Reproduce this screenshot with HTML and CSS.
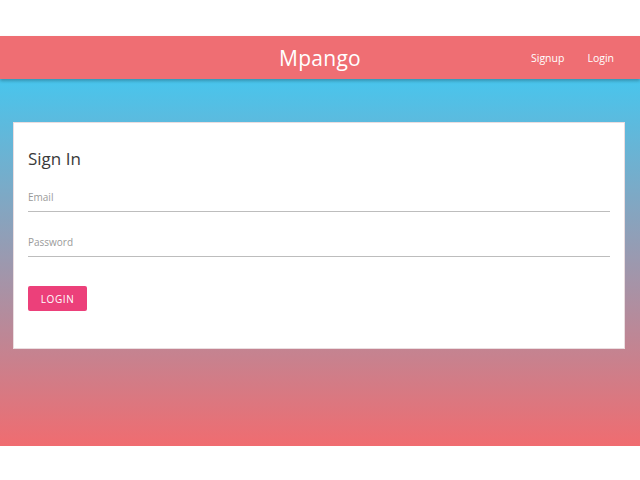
FILE: index.html
```html
<!DOCTYPE html>
<html>
<head>
<meta charset="utf-8">
<link rel="stylesheet" href="styles.css">
</head>
<body>
<div class="page">
  <header class="topbar">
    <div class="brand">Mpango</div>
    <nav class="nav">
      <a class="nav-link">Signup</a>
      <a class="nav-link">Login</a>
    </nav>
  </header>
  <main class="hero">
    <section class="card">
      <h1 class="card-title">Sign In</h1>
      <div class="field">
        <label class="field-label">Email</label>
      </div>
      <div class="field">
        <label class="field-label">Password</label>
      </div>
      <button class="btn">LOGIN</button>
    </section>
  </main>
</div>
</body>
</html>
```
FILE: styles.css
```css
* { box-sizing: border-box; }
html, body { margin: 0; padding: 0; background: #fff; }
body { font-family: "Open Sans", "Noto Sans", sans-serif; }
.page { padding-top: 36px; }
.topbar {
  position: relative;
  z-index: 2;
  height: 43px;
  background: #ef6e73;
  display: flex;
  align-items: center;
  justify-content: center;
  box-shadow: 0 2px 3px rgba(0,0,0,0.25);
}
.brand {
  color: #fff;
  font-size: 21px;
  letter-spacing: 0.3px;
}
.nav {
  position: absolute;
  right: 26px;
  top: 0;
  height: 43px;
  display: flex;
  align-items: center;
  gap: 23px;
}
.nav-link { color: #fff; font-size: 10.5px; }
.hero {
  height: 367px;
  background: linear-gradient(#48c5ed, #f06c70);
  padding: 43px 15px 0 13px;
}
.card {
  background: #fff;
  height: 227px;
  padding: 24px 14px 0 14px;
  border: 1px solid #eadde0;
}
.card-title {
  margin: 0 0 16px 0;
  font-weight: 400;
  font-size: 17px;
  color: #3a3a3a;
  line-height: 24px;
}
.field {
  border-bottom: 1px solid #bdbdbd;
  height: 25px;
  padding-top: 3px;
  margin-bottom: 20px;
}
.field-label {
  font-size: 10px;
  color: #9a9a9a;
  line-height: 14px;
  display: block;
}
.btn {
  margin-top: 9px;
  background: #ec407a;
  color: #fff;
  border: none;
  border-radius: 2px;
  font-family: inherit;
  font-size: 10px;
  letter-spacing: 0.6px;
  width: 59px;
  height: 25px;
  padding: 0;
}
```
